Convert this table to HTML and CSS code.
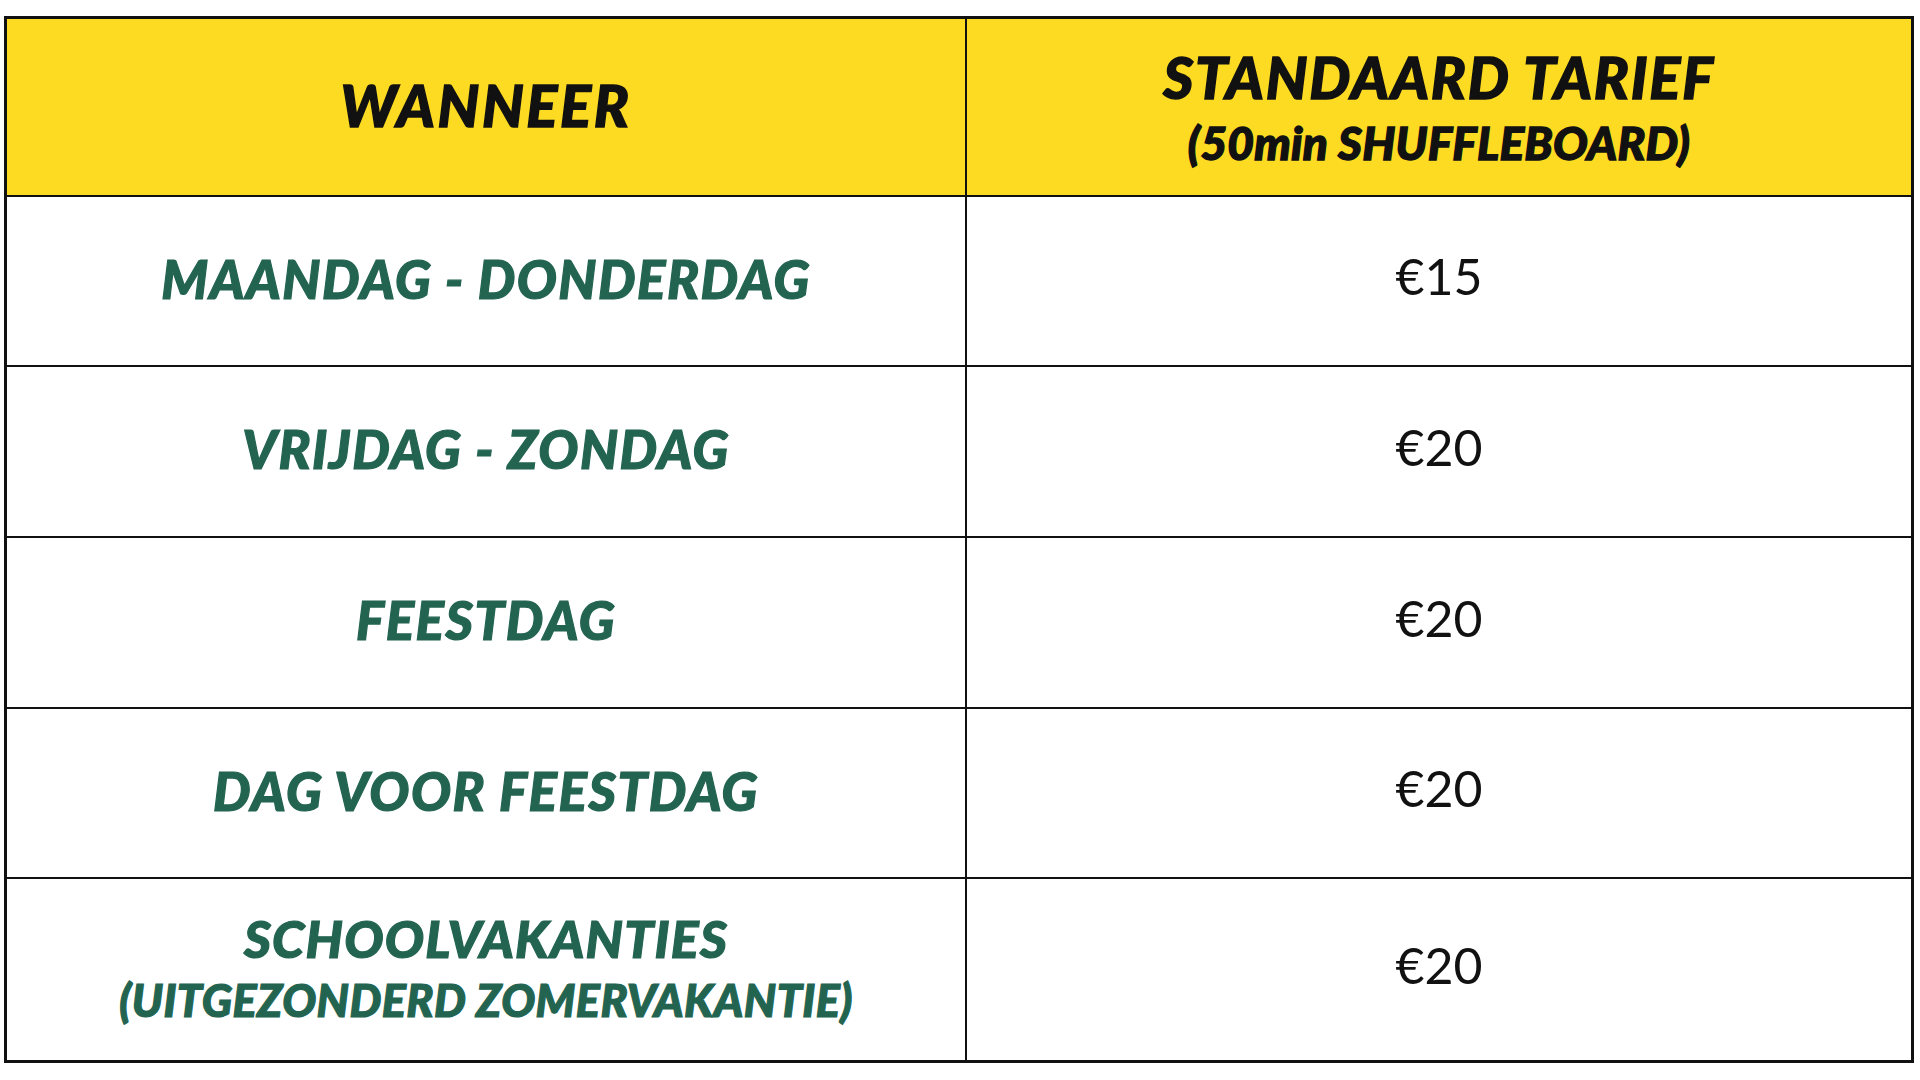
FILE: index.html
```html
<!DOCTYPE html>
<html lang="nl">
<head>
<meta charset="utf-8">
<title>Tarieven</title>
<link rel="stylesheet" href="styles.css">
</head>
<body>
<div class="table">
  <div class="cell head"><span class="h-main">WANNEER</span></div>
  <div class="cell head"><span class="h-main h-tarief">STANDAARD TARIEF</span><span class="h-sub">(50min SHUFFLEBOARD)</span></div>

  <div class="cell day"><span class="d-main">MAANDAG - DONDERDAG</span></div>
  <div class="cell price">€15</div>

  <div class="cell day"><span class="d-main">VRIJDAG - ZONDAG</span></div>
  <div class="cell price">€20</div>

  <div class="cell day"><span class="d-main">FEESTDAG</span></div>
  <div class="cell price">€20</div>

  <div class="cell day"><span class="d-main">DAG VOOR FEESTDAG</span></div>
  <div class="cell price">€20</div>

  <div class="cell day day-two"><span class="d-main">SCHOOLVAKANTIES</span><span class="d-sub">(UITGEZONDERD ZOMERVAKANTIE)</span></div>
  <div class="cell price">€20</div>
</div>
</body>
</html>
```

FILE: styles.css
```css
html, body {
  margin: 0;
  padding: 0;
  background: #ffffff;
}

body {
  font-family: "Lato", "Open Sans", "DejaVu Sans", sans-serif;
}

.table {
  box-sizing: border-box;
  width: 1910px;
  height: 1047px;
  margin: 16px 0 0 4px;
  border: 3px solid #111111;
  background: #111111;
  display: grid;
  grid-template-columns: 958px 1fr;
  grid-template-rows: 176px 168px 169px 169px 168px 181px;
  gap: 2px;
}

.cell {
  display: flex;
  flex-direction: column;
  align-items: center;
  justify-content: center;
  background: #ffffff;
  text-align: center;
}

.head {
  background: #fddb22;
  color: #111111;
  font-style: italic;
  font-weight: 900;
  -webkit-text-stroke: 1.4px #111111;
}

.h-main {
  font-size: 58px;
  line-height: 1;
  letter-spacing: 2.6px;
  padding-bottom: 4px;
}

.h-tarief {
  font-size: 58px;
  letter-spacing: 1.8px;
  padding-bottom: 2px;
}

.h-sub {
  font-size: 46px;
  line-height: 1;
  letter-spacing: 0.2px;
  margin-top: 12px;
}

.day {
  color: #236451;
  font-style: italic;
  font-weight: 900;
  -webkit-text-stroke: 1.2px #236451;
  padding-bottom: 6px;
  box-sizing: border-box;
}

.d-main {
  font-size: 53px;
  line-height: 1;
  letter-spacing: 1.5px;
}

.day-two {
  padding-bottom: 4px;
}

.day-two .d-main {
  font-size: 52px;
  letter-spacing: 1.2px;
}

.d-sub {
  font-size: 45px;
  line-height: 1;
  letter-spacing: 0.4px;
  margin-top: 14px;
}

.price {
  color: #111111;
  font-weight: 400;
  font-size: 50px;
  line-height: 1;
  padding-bottom: 10px;
  box-sizing: border-box;
}
```
